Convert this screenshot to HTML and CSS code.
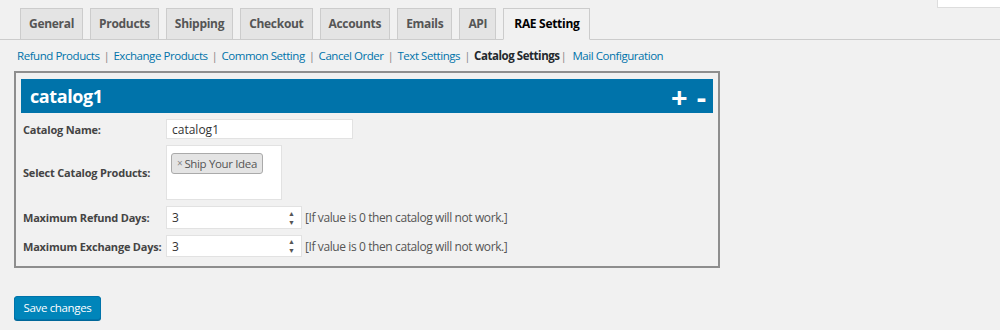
FILE: index.html
```html
<!DOCTYPE html>
<html>
<head>
<meta charset="utf-8">
<link rel="stylesheet" href="styles.css">
</head>
<body>
<div class="page">
  <div class="search-stub"></div>
  <nav class="tabs">
    <a class="tab">General</a>
    <a class="tab">Products</a>
    <a class="tab">Shipping</a>
    <a class="tab">Checkout</a>
    <a class="tab">Accounts</a>
    <a class="tab">Emails</a>
    <a class="tab">API</a>
    <a class="tab active">RAE Setting</a>
  </nav>
  <div class="subnav">
    <a class="link">Refund Products</a><span class="sep">|</span><a class="link">Exchange Products</a><span class="sep">|</span><a class="link">Common Setting</a><span class="sep">|</span><a class="link">Cancel Order</a><span class="sep">|</span><a class="link">Text Settings</a><span class="sep">|</span><b class="current">Catalog Settings</b><span class="sep tight">|</span><a class="link">Mail Configuration</a>
  </div>
  <div class="catalog-box">
    <div class="catalog-head">
      <span class="catalog-title">catalog1</span>
      <span class="catalog-actions"><span class="plus">+</span><span class="minus">-</span></span>
    </div>
    <div class="form">
      <label class="lbl">Catalog Name:</label>
      <div class="field"><div class="input name-input">catalog1</div></div>
      <label class="lbl">Select Catalog Products:</label>
      <div class="field"><div class="select-box"><span class="chip"><span class="chip-x">×</span>Ship Your Idea</span></div></div>
      <label class="lbl">Maximum Refund Days:</label>
      <div class="field"><div class="input num-input"><span>3</span><span class="spin"><i>▲</i><i>▼</i></span></div><span class="note">[If value is 0 then catalog will not work.]</span></div>
      <label class="lbl">Maximum Exchange Days:</label>
      <div class="field"><div class="input num-input"><span>3</span><span class="spin"><i>▲</i><i>▼</i></span></div><span class="note">[If value is 0 then catalog will not work.]</span></div>
    </div>
  </div>
  <div class="actions"><button class="save">Save changes</button></div>
</div>
</body>
</html>
```
FILE: styles.css
```css
* { box-sizing: border-box; }
html, body { margin: 0; padding: 0; }
body {
  background: #f1f1f1;
  font-family: "Open Sans", "Noto Sans", sans-serif;
  color: #444;
  width: 1000px;
  height: 330px;
  overflow: hidden;
}
.page { position: relative; }
.search-stub {
  position: absolute;
  top: -20px;
  left: 937px;
  width: 70px;
  height: 28px;
  background: #fff;
  border: 1px solid #ddd;
}
.tabs {
  display: flex;
  gap: 7px;
  padding: 8px 0 0 20px;
  border-bottom: 1px solid #ccc;
  height: 40px;
}
.tab {
  display: block;
  height: 32px;
  margin-bottom: -1px;
  padding: 0 8px;
  line-height: 30px;
  font-size: 12px;
  font-weight: 700;
  letter-spacing: -0.3px;
  color: #555;
  background: #e4e4e4;
  border: 1px solid #ccc;
}
.tab.active {
  background: #f1f1f1;
  color: #000;
  border-bottom-color: #f1f1f1;
  padding: 0 10px;
}
.subnav {
  display: flex;
  align-items: center;
  height: 31px;
  padding-left: 17px;
  font-size: 11.5px;
  letter-spacing: -0.45px;
}
.link { color: #0073aa; }
.sep { color: #888; margin: 0 4px 0 4px; }
.sep.tight { margin: 0 6px 0 1px; }
.current { color: #23282d; font-weight: 700; }
.catalog-box {
  margin-left: 14px;
  width: 706px;
  height: 197px;
  border: 2px solid #8e8e8e;
  padding: 6px 5px 0 5px;
}
.catalog-head {
  height: 34px;
  background: #0073aa;
  display: flex;
  align-items: center;
  justify-content: space-between;
  padding: 0 7px 0 9px;
  color: #fff;
  font-weight: 700;
}
.catalog-title { font-size: 18px; letter-spacing: -0.4px; }
.catalog-actions { display: flex; align-items: center; gap: 9px; font-size: 29px; line-height: 1; }
.plus, .minus { display: block; }
.form {
  display: grid;
  grid-template-columns: 143px auto;
  grid-template-rows: 20px 55px 23px 22px;
  row-gap: 6px;
  padding: 6px 0 0 2px;
}
.lbl {
  display: flex;
  align-items: center;
  font-size: 11px;
  font-weight: 700;
  color: #444;
  letter-spacing: -0.2px;
  white-space: nowrap;
}
.field { display: flex; align-items: center; }
.input {
  background: #fff;
  border: 1px solid #e2e2e2;
  font-size: 12px;
  color: #333;
  display: flex;
  align-items: center;
  padding-left: 5px;
}
.name-input { width: 187px; height: 20px; }
.num-input { width: 136px; height: 100%; justify-content: space-between; padding-right: 6px; }
.spin {
  display: flex;
  flex-direction: column;
  gap: 2px;
  font-size: 7px;
  line-height: 7px;
  color: #555;
}
.spin i { font-style: normal; }
.select-box {
  width: 116px;
  height: 55px;
  background: #fff;
  border: 1px solid #e2e2e2;
  padding: 4px;
}
.chip {
  display: inline-flex;
  align-items: center;
  height: 21px;
  padding: 0 5px 0 5px;
  background: #e4e4e4;
  border: 1px solid #aaa;
  border-radius: 3px;
  font-size: 11.5px;
  color: #555;
  letter-spacing: -0.35px;
}
.chip-x { font-size: 10px; color: #888; margin-right: 2px; }
.note {
  font-size: 12px;
  color: #555;
  margin-left: 3px;
  letter-spacing: -0.4px;
}
.actions { padding: 27px 0 0 14px; }
.save {
  width: 87px;
  height: 24px;
  background: #0085ba;
  border: 1px solid #0073aa;
  border-radius: 3px;
  box-shadow: 0 1px 0 #006799;
  color: #fff;
  font-family: "Open Sans", "Noto Sans", sans-serif;
  font-size: 11.5px;
  letter-spacing: -0.35px;
  padding: 0;
}
```
